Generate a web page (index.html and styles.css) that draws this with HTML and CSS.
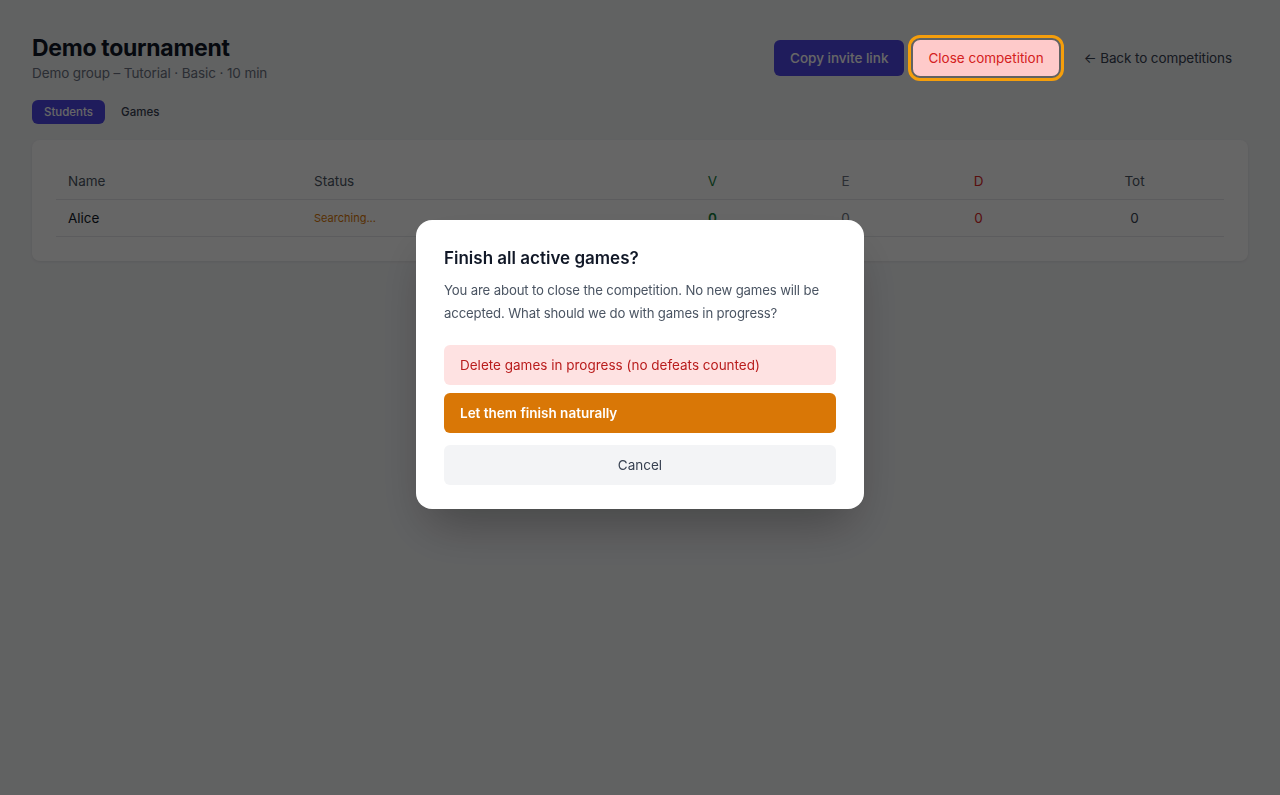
FILE: index.html
```html
<!DOCTYPE html>
<html lang="en">
<head>
<meta charset="utf-8">
<title>Demo tournament</title>
<link rel="stylesheet" href="styles.css">
</head>
<body>
<div class="page">
  <header class="top">
    <div class="heading">
      <h1 class="title">Demo tournament</h1>
      <p class="subtitle">Demo group – Tutorial · Basic · 10 min</p>
    </div>
    <div class="actions">
      <button class="btn btn-primary">Copy invite link</button>
      <button class="btn btn-close">Close competition</button>
      <a class="back" href="#">← Back to competitions</a>
    </div>
  </header>
  <nav class="tabs">
    <span class="tab tab-active">Students</span>
    <span class="tab">Games</span>
  </nav>
  <section class="card">
    <table class="table">
      <thead>
        <tr>
          <th class="c-name">Name</th>
          <th class="c-status">Status</th>
          <th class="c-num v">V</th>
          <th class="c-num e">E</th>
          <th class="c-num d">D</th>
          <th class="c-tot">Tot</th>
        </tr>
      </thead>
      <tbody>
        <tr>
          <td class="c-name name">Alice</td>
          <td class="c-status"><span class="searching">Searching...</span></td>
          <td class="c-num v strong">0</td>
          <td class="c-num e">0</td>
          <td class="c-num d">0</td>
          <td class="c-tot tot">0</td>
        </tr>
      </tbody>
    </table>
  </section>
</div>

<div class="overlay">
  <div class="modal">
    <h2 class="modal-title">Finish all active games?</h2>
    <p class="modal-text">You are about to close the competition. No new games will be accepted. What should we do with games in progress?</p>
    <div class="modal-actions">
      <button class="mbtn mbtn-delete">Delete games in progress (no defeats counted)</button>
      <button class="mbtn mbtn-finish">Let them finish naturally</button>
      <button class="mbtn mbtn-cancel">Cancel</button>
    </div>
  </div>
</div>
</body>
</html>
```

FILE: styles.css
```css
* { box-sizing: border-box; }
html, body { margin: 0; padding: 0; }
body {
  font-family: Inter, "Noto Sans", "Liberation Sans", sans-serif;
  background: #f3f4f6;
  color: #111827;
  min-height: 795px;
}
button { font-family: inherit; border: 0; cursor: pointer; }

.page { padding: 32px 32px; }

.top {
  display: flex;
  justify-content: space-between;
  align-items: flex-start;
}
.title {
  margin: 0;
  font-size: 23px;
  line-height: 32px;
  font-weight: 700;
  letter-spacing: -0.3px;
  color: #111827;
}
.subtitle {
  margin: 0;
  font-size: 13.5px;
  line-height: 18px;
  color: #6b7280;
  letter-spacing: -0.1px;
}
.actions {
  display: flex;
  align-items: center;
  gap: 9px;
  padding-top: 8px;
}
.btn {
  height: 36px;
  padding: 0 16px;
  border-radius: 6px;
  font-size: 13.5px;
  font-weight: 500;
  white-space: nowrap;
}
.btn-primary { background: #4f46e5; color: #fff; }
.btn-close {
  position: relative;
  z-index: 60;
  background: #fecaca;
  color: #d42020;
  font-weight: 400;
  padding: 0 15px;
  outline: 3px solid #f59e0b;
  outline-offset: 2px;
  border-radius: 7px;
}
.back {
  color: #374151;
  text-decoration: none;
  font-size: 13.5px;
  padding: 0 16px 0 16px;
  letter-spacing: -0.1px;
  white-space: nowrap;
}

.tabs {
  display: flex;
  gap: 4px;
  margin-top: 18px;
}
.tab {
  height: 24px;
  line-height: 24px;
  padding: 0 12px;
  border-radius: 6px;
  font-size: 11.5px;
  font-weight: 500;
  color: #374151;
}
.tab-active { background: #4f46e5; color: #fff; }

.card {
  margin-top: 16px;
  background: #fff;
  border-radius: 8px;
  padding: 24px;
  box-shadow: 0 1px 3px rgba(0,0,0,0.08);
}
.table {
  width: 100%;
  border-collapse: collapse;
  font-size: 13.5px;
}
.table th, .table td {
  padding: 8px 12px;
  line-height: 19px;
  border-bottom: 1px solid #e5e7eb;
  font-weight: 400;
}
.table th { color: #4b5563; }
.c-name { width: 246px; text-align: left; }
.c-status { width: 344px; text-align: left; }
.c-num { width: 133px; text-align: center; }
.c-tot { text-align: center; }
.table .v { color: #15803d; }
.table .e { color: #6b7280; }
.table .d { color: #dc2626; }
.table .tot { color: #374151; }
.table .strong { font-weight: 600; }
.name { color: #111827; }
.searching { font-size: 11px; color: #d97706; }

.overlay {
  position: fixed;
  inset: 0;
  background: rgba(0,0,0,0.6);
  display: flex;
  justify-content: center;
  align-items: flex-start;
  padding-top: 220px;
  z-index: 50;
}
.modal {
  width: 448px;
  background: #fff;
  border-radius: 16px;
  padding: 24px 28px 24px;
  box-shadow: 0 25px 50px -12px rgba(0,0,0,0.3);
}
.modal-title {
  margin: 0;
  font-size: 17px;
  line-height: 28px;
  font-weight: 600;
  color: #111827;
}
.modal-text {
  margin: 7px 0 0;
  font-size: 13.2px;
  line-height: 23px;
  letter-spacing: -0.15px;
  color: #4b5563;
}
.modal-actions {
  display: flex;
  flex-direction: column;
  gap: 8px;
  margin-top: 20px;
}
.mbtn {
  height: 40px;
  border-radius: 6px;
  padding: 0 16px;
  font-size: 13.5px;
  text-align: left;
}
.mbtn-delete { background: #fee2e2; color: #b91c1c; }
.mbtn-finish { background: #d97706; color: #fff; font-weight: 600; }
.mbtn-cancel { background: #f3f4f6; color: #374151; text-align: center; margin-top: 4px; }
```
